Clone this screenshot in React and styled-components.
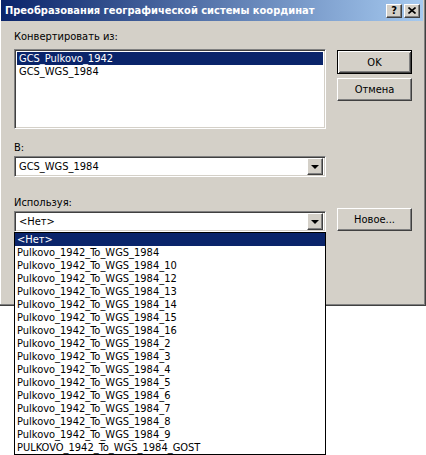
import React from 'react';
import styled, { createGlobalStyle, css } from 'styled-components';

const GlobalStyle = createGlobalStyle`
  html, body {
    margin: 0;
    padding: 0;
    background: #ffffff;
  }
  body {
    font-family: "DejaVu Sans Condensed", "Liberation Sans", Arial, sans-serif;
    font-size: 11px;
    color: #000;
  }
`;

const raised = css`
  border: 1px solid;
  border-color: #ffffff #404040 #404040 #ffffff;
  box-shadow: inset -1px -1px #808080, inset 1px 1px #d4d0c8;
  background: #d4d0c8;
`;

const sunken = css`
  border: 1px solid;
  border-color: #808080 #ffffff #ffffff #808080;
  box-shadow: inset 1px 1px #404040, inset -1px -1px #d4d0c8;
  background: #ffffff;
`;

const Page = styled.div`
  position: relative;
  width: 426px;
  height: 455px;
  overflow: hidden;
`;

const Window = styled.div`
  box-sizing: border-box;
  width: 426px;
  height: 306px;
  background: #d4d0c8;
  border-right: 1px solid #404040;
  border-bottom: 1px solid #404040;
  box-shadow: inset -1px -1px #808080, inset 1px 0 #ffffff;
  padding-left: 1px;
  display: flex;
  flex-direction: column;
`;

const TitleBar = styled.div`
  height: 21px;
  margin-right: 2px;
  background: linear-gradient(to right, #0a246a, #a6caf0);
  display: flex;
  align-items: center;
  padding-left: 4px;
  padding-right: 3px;
`;

const Title = styled.div`
  flex: 1;
  color: #ffffff;
  font-weight: bold;
  font-size: 11px;
  white-space: nowrap;
`;

const CaptionButton = styled.div`
  ${raised};
  box-sizing: border-box;
  width: 16px;
  height: 14px;
  margin-left: ${(p) => (p.$gap ? 2 : 0)}px;
  display: flex;
  align-items: center;
  justify-content: center;
  font-weight: bold;
  font-size: 11px;
  line-height: 1;
`;

const Body = styled.div`
  display: flex;
  gap: 11px;
  padding: 9px 0 0 13px;
`;

const LeftCol = styled.div`
  width: 312px;
  display: flex;
  flex-direction: column;
`;

const RightCol = styled.div`
  width: 75px;
  display: flex;
  flex-direction: column;
`;

const Label = styled.div`
  height: 13px;
  line-height: 13px;
  margin-top: ${(p) => p.$top || 0}px;
`;

const ListBox = styled.div`
  ${sunken};
  box-sizing: border-box;
  height: 80px;
  margin-top: 6px;
  padding: 2px 2px;
`;

const Row = styled.div`
  height: 13px;
  line-height: 13px;
  padding-left: 2px;
  white-space: nowrap;
  background: ${(p) => (p.$selected ? '#0a246a' : 'transparent')};
  color: ${(p) => (p.$selected ? '#ffffff' : '#000000')};
`;

const ComboWrap = styled.div`
  position: relative;
  margin-top: 2px;
`;

const Combo = styled.div`
  ${sunken};
  box-sizing: border-box;
  height: 21px;
  display: flex;
  align-items: center;
  padding: 2px;
`;

const ComboText = styled.div`
  flex: 1;
  padding-left: 2px;
  line-height: 17px;
`;

const DropButton = styled.div`
  ${raised};
  box-sizing: border-box;
  width: 16px;
  height: 17px;
  display: flex;
  align-items: center;
  justify-content: center;
`;

const Arrow = styled.div`
  width: 0;
  height: 0;
  border-left: 4px solid transparent;
  border-right: 4px solid transparent;
  border-top: 4px solid #000;
  margin-top: 1px;
`;

const Popup = styled.div`
  position: absolute;
  left: 0;
  top: 100%;
  width: 312px;
  box-sizing: border-box;
  border: 1px solid #000;
  background: #ffffff;
`;

const Button = styled.div`
  box-sizing: border-box;
  width: 75px;
  height: ${(p) => (p.$default ? 24 : 23)}px;
  margin-top: ${(p) => p.$top || 0}px;
  display: flex;
  align-items: center;
  justify-content: center;
  background: #d4d0c8;
  ${(p) =>
    p.$default
      ? css`
          border: 1px solid #000;
          box-shadow: inset 1px 1px #ffffff, inset -1px -1px #404040,
            inset 2px 2px #d4d0c8, inset -2px -2px #808080;
        `
      : raised}
`;

const transforms = [
  '<Нет>',
  'Pulkovo_1942_To_WGS_1984',
  'Pulkovo_1942_To_WGS_1984_10',
  'Pulkovo_1942_To_WGS_1984_12',
  'Pulkovo_1942_To_WGS_1984_13',
  'Pulkovo_1942_To_WGS_1984_14',
  'Pulkovo_1942_To_WGS_1984_15',
  'Pulkovo_1942_To_WGS_1984_16',
  'Pulkovo_1942_To_WGS_1984_2',
  'Pulkovo_1942_To_WGS_1984_3',
  'Pulkovo_1942_To_WGS_1984_4',
  'Pulkovo_1942_To_WGS_1984_5',
  'Pulkovo_1942_To_WGS_1984_6',
  'Pulkovo_1942_To_WGS_1984_7',
  'Pulkovo_1942_To_WGS_1984_8',
  'Pulkovo_1942_To_WGS_1984_9',
  'PULKOVO_1942_To_WGS_1984_GOST',
];

function CloseGlyph() {
  return (
    <svg width="8" height="7" viewBox="0 0 8 7">
      <path d="M0.5 0.5 L7.5 6.5 M7.5 0.5 L0.5 6.5" stroke="#000" strokeWidth="1.6" />
    </svg>
  );
}

export default function App() {
  return (
    <Page>
      <GlobalStyle />
      <Window>
        <TitleBar>
          <Title>Преобразования географической системы координат</Title>
          <CaptionButton>?</CaptionButton>
          <CaptionButton $gap>
            <CloseGlyph />
          </CaptionButton>
        </TitleBar>
        <Body>
          <LeftCol>
            <Label>Конвертировать из:</Label>
            <ListBox>
              <Row $selected>GCS_Pulkovo_1942</Row>
              <Row>GCS_WGS_1984</Row>
            </ListBox>
            <Label $top={12}>В:</Label>
            <ComboWrap>
              <Combo>
                <ComboText>GCS_WGS_1984</ComboText>
                <DropButton>
                  <Arrow />
                </DropButton>
              </Combo>
            </ComboWrap>
            <Label $top={19}>Используя:</Label>
            <ComboWrap>
              <Combo>
                <ComboText>&lt;Нет&gt;</ComboText>
                <DropButton>
                  <Arrow />
                </DropButton>
              </Combo>
              <Popup>
                {transforms.map((t, i) => (
                  <Row key={t} $selected={i === 0}>
                    {t}
                  </Row>
                ))}
              </Popup>
            </ComboWrap>
          </LeftCol>
          <RightCol>
            <Button $default $top={20}>OK</Button>
            <Button $top={4}>Отмена</Button>
            <Button $top={107}>Новое...</Button>
          </RightCol>
        </Body>
      </Window>
    </Page>
  );
}
